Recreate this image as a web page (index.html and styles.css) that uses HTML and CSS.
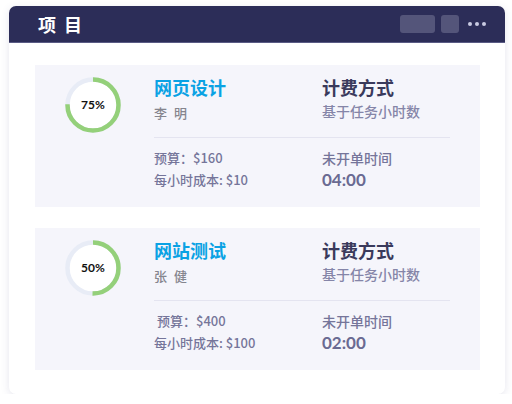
FILE: index.html
```html
<!DOCTYPE html>
<html>
<head>
<meta charset="utf-8">
<link rel="stylesheet" href="styles.css">
</head>
<body>

<div class="card">

<div class="card-head">
<h1>项 目</h1>
<div class="tools">
<span class="tool wide"></span>
<span class="tool"></span>
<span class="dots"><i></i><i></i><i></i></span>
</div>
</div>

<div class="card-body">

<div class="project">
<div class="ring">
<svg width="56" height="56" viewBox="0 0 56 56">
<circle cx="28" cy="28" r="25.5" fill="#fff" stroke="#e8ecf6" stroke-width="4.5"/>
<circle cx="28" cy="28" r="25.5" fill="none" stroke="#94d07a" stroke-width="4.5"
 stroke-dasharray="120.2 160.2" transform="rotate(-90 28 28)"/>
</svg>
<span class="pct">75%</span>
</div>
<div class="info">
<div class="row top">
<div class="col">
<div class="title">网页设计</div>
<div class="person">李 明</div>
</div>
<div class="col right">
<div class="label">计费方式</div>
<div class="sub">基于任务小时数</div>
</div>
</div>
<div class="row bottom">
<div class="col">
<div class="meta">预算：$160</div>
<div class="meta">每小时成本: $10</div>
</div>
<div class="col right">
<div class="meta">未开单时间</div>
<div class="time">04:00</div>
</div>
</div>
</div>
</div>

<div class="project">
<div class="ring">
<svg width="56" height="56" viewBox="0 0 56 56">
<circle cx="28" cy="28" r="25.5" fill="#fff" stroke="#e8ecf6" stroke-width="4.5"/>
<circle cx="28" cy="28" r="25.5" fill="none" stroke="#94d07a" stroke-width="4.5"
 stroke-dasharray="80.1 160.2" transform="rotate(-90 28 28)"/>
</svg>
<span class="pct">50%</span>
</div>
<div class="info">
<div class="row top">
<div class="col">
<div class="title">网站测试</div>
<div class="person">张 健</div>
</div>
<div class="col right">
<div class="label">计费方式</div>
<div class="sub">基于任务小时数</div>
</div>
</div>
<div class="row bottom">
<div class="col">
<div class="meta indent">预算：$400</div>
<div class="meta">每小时成本: $100</div>
</div>
<div class="col right">
<div class="meta">未开单时间</div>
<div class="time">02:00</div>
</div>
</div>
</div>
</div>

</div>
</div>

</body>
</html>
```

FILE: styles.css
```css
body {
margin: 0;
background: #fff;
font-family: "Noto Sans CJK SC", "Noto Sans", sans-serif;
}

.card {
margin: 6px 7px 0 9px;
width: 496px;
height: 388px;
background: #fff;
border-radius: 7px;
box-shadow: 0 2px 8px rgba(60, 60, 120, 0.13);
overflow: hidden;
}

.card-head {
height: 36px;
background: #2c2d58;
border-bottom: 1px solid #5a5b85;
display: flex;
align-items: center;
justify-content: space-between;
padding: 0 19px 0 29px;
}

.card-head h1 {
margin: 0;
color: #fff;
font-size: 18px;
font-weight: bold;
letter-spacing: 2px;
}

.tools { display: flex; align-items: center; gap: 6px; }

.tool {
width: 18px;
height: 18px;
border-radius: 3px;
background: #54557a;
}
.tool.wide { width: 35px; }

.dots { display: flex; gap: 3px; margin-left: 3px; }
.dots i {
width: 4px;
height: 4px;
border-radius: 50%;
background: #c9cae2;
}

.card-body {
padding: 22px 25px 0 26px;
display: flex;
flex-direction: column;
gap: 21px;
}

.project {
height: 142px;
background: #f5f5fb;
display: flex;
}

.ring {
position: relative;
width: 56px;
height: 56px;
margin: 12px 33px 0 30px;
}
.ring svg { display: block; }
.pct {
position: absolute;
left: 0;
top: 0;
width: 56px;
line-height: 56px;
text-align: center;
font-family: Lato, sans-serif;
font-weight: bold;
font-size: 12px;
color: #111;
}

.info { width: 296px; }

.row { display: flex; }
.row.top {
height: 73px;
border-bottom: 1px solid #e4e4f0;
padding-top: 10px;
box-sizing: border-box;
}
.row.bottom { padding-top: 9px; }

.col { width: 168px; }
.col.right { width: 128px; }

.title {
font-size: 18px;
line-height: 24px;
font-weight: bold;
color: #0aa2e4;
}
.person {
font-size: 13px;
line-height: 20px;
margin-top: 4px;
color: #85858e;
font-weight: 500;
letter-spacing: 2px;
}

.label {
font-size: 18px;
line-height: 24px;
font-weight: bold;
color: #3a3a5c;
}
.sub {
font-size: 14px;
line-height: 20px;
margin-top: 2px;
color: #8585a8;
font-weight: 500;
}

.meta {
font-size: 13px;
line-height: 22px;
color: #75759a;
font-weight: 500;
}
.meta.indent { padding-left: 3px; }
.col.right .meta { font-size: 14px; }

.time {
font-family: Lato, sans-serif;
font-size: 17px;
line-height: 22px;
font-weight: bold;
color: #6a6a92;
}
```
